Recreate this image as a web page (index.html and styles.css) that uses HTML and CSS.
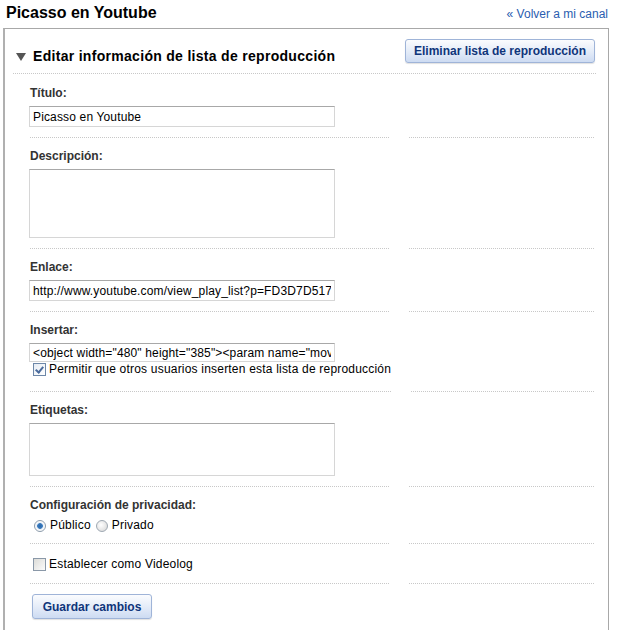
FILE: index.html
```html
<!DOCTYPE html>
<html lang="es">
<head>
  <meta charset="UTF-8">
  <meta name="viewport" content="width=device-width, initial-scale=1.0">
  <title>Picasso en Youtube</title>
  <link rel="stylesheet" href="styles.css">
</head>
<body>

  <div class="page-head">
    <h1 class="page-title">Picasso en Youtube</h1>
    <a class="back-link" href="#">« Volver a mi canal</a>
  </div>

  <div class="panel">
    <div class="panel-head">
      <h2 class="panel-title">
        <svg class="toggle" width="10" height="8" viewBox="0 0 10 8"><polygon points="0,0 10,0 5,8" fill="#555"/></svg>
        Editar información de lista de reproducción
      </h2>
      <button class="btn btn-delete" type="button">Eliminar lista de reproducción</button>
    </div>

    <form class="panel-body">
      <!-- Titulo -->
      <div class="row">
        <div class="field">
          <label class="field-label">Título:</label>
          <input class="text-input" type="text" value="Picasso en Youtube">
        </div>
        <div class="aside"></div>
      </div>

      <!-- Descripcion -->
      <div class="row">
        <div class="field">
          <label class="field-label">Descripción:</label>
          <textarea class="text-area desc"></textarea>
        </div>
        <div class="aside"></div>
      </div>

      <!-- Enlace -->
      <div class="row">
        <div class="field">
          <label class="field-label">Enlace:</label>
          <input class="text-input" type="text" value="http://www.youtube.com/view_play_list?p=FD3D7D51747D1E70">
        </div>
        <div class="aside"></div>
      </div>

      <!-- Insertar -->
      <div class="row">
        <div class="field field-embed">
          <label class="field-label">Insertar:</label>
          <input class="text-input embed" type="text" value="&lt;object width=&quot;480&quot; height=&quot;385&quot;&gt;&lt;param name=&quot;movie&quot; value=&quot;http://www.youtube.com/p/FD3D7D517&quot;&gt;">
          <label class="option"><input class="check" type="checkbox" checked> Permitir que otros usuarios inserten esta lista de reproducción</label>
        </div>
        <div class="aside"></div>
      </div>

      <!-- Etiquetas -->
      <div class="row">
        <div class="field">
          <label class="field-label">Etiquetas:</label>
          <textarea class="text-area tags"></textarea>
        </div>
        <div class="aside"></div>
      </div>

      <!-- Privacidad -->
      <div class="row">
        <div class="field">
          <label class="field-label">Configuración de privacidad:</label>
          <div class="radios">
            <label class="option"><input class="radio" type="radio" name="privacy" checked> Público</label>
            <label class="option"><input class="radio" type="radio" name="privacy"> Privado</label>
          </div>
        </div>
        <div class="aside"></div>
      </div>

      <!-- Videolog -->
      <div class="row">
        <div class="field field-single">
          <label class="option"><input class="check" type="checkbox"> Establecer como Videolog</label>
        </div>
        <div class="aside"></div>
      </div>

      <div class="actions">
        <button class="btn btn-save" type="button">Guardar cambios</button>
      </div>
    </form>
  </div>

</body>
</html>
```

FILE: styles.css
```css
body {
  margin: 0;
  font-family: "Liberation Sans", Arial, sans-serif;
  font-size: 12px;
  color: #000000;
  background: #ffffff;
}

.page-head {
  display: flex;
  justify-content: space-between;
  align-items: baseline;
  height: 28px;
  padding: 0 12px 0 6px;
  box-sizing: border-box;
}

.page-title {
  margin: 3px 0 0 0;
  font-size: 16px;
  line-height: 19px;
  font-weight: bold;
}

.back-link {
  color: #2a5db0;
  text-decoration: none;
  font-size: 12px;
}

.panel {
  width: 606px;
  margin-left: 3px;
  border: 1px solid #a8a8a8;
  border-left: 2px solid #b0b0b0;
  border-bottom: none;
  box-sizing: border-box;
  padding: 0 12px 20px 8px;
}

.panel-head {
  display: flex;
  justify-content: space-between;
  align-items: flex-start;
  height: 24px;
  padding: 10px 1px 10px 3px;
  border-bottom: 1px dotted #c8c8c8;
}

.panel-title {
  margin: 9px 0 0 0;
  font-size: 14px;
  line-height: 17px;
  font-weight: bold;
  letter-spacing: 0.3px;
  display: flex;
  align-items: center;
  gap: 7px;
}

.toggle {
  display: block;
  margin-top: 1px;
}

.btn {
  font-family: "Liberation Sans", Arial, sans-serif;
  font-size: 12px;
  font-weight: bold;
  color: #0f357a;
  background: linear-gradient(to bottom, #fbfcfe, #e3ebf8 55%, #cddbf2);
  border: 1px solid #9fb4d8;
  border-radius: 3px;
  box-shadow: 0 1px 1px rgba(0, 0, 0, 0.12);
  cursor: pointer;
}

.btn-delete {
  width: 190px;
  height: 24px;
  padding: 0;
}

.panel-body {
  margin: 0;
  padding: 0 2px 0 17px;
}

.row {
  display: flex;
  gap: 20px;
}

.field {
  width: 362px;
  padding: 11px 0 10px;
  border-bottom: 1px dotted #c8c8c8;
}

.row:first-child .field {
  padding-top: 12px;
}

.aside {
  width: 186px;
  border-bottom: 1px dotted #c8c8c8;
}

.field-label {
  display: block;
  font-weight: bold;
  color: #333333;
  line-height: 15px;
  margin-bottom: 5px;
}

.text-input,
.text-area {
  display: block;
  width: 306px;
  margin-left: -1px;
  box-sizing: border-box;
  border: 1px solid #d6d6d6;
  border-top-color: #a8a8a8;
  font-family: "Liberation Sans", Arial, sans-serif;
  font-size: 12px;
  letter-spacing: 0.15px;
  color: #000000;
  background: #ffffff;
  outline: none;
}

.text-input {
  height: 21px;
  padding: 0 3px;
}

.text-input.embed {
  height: 19px;
}

.text-area {
  resize: none;
  padding: 2px 3px;
}

.text-area.desc {
  height: 69px;
}

.text-area.tags {
  height: 53px;
}

.option {
  display: inline-flex;
  align-items: center;
  line-height: 15px;
  letter-spacing: 0.2px;
  white-space: nowrap;
  color: #000000;
}

.field-embed .option {
  margin: 0 0 4px 3px;
}

.field-single {
  padding: 13px 0 9px;
}

.field-single .option {
  margin-left: 3px;
}

.radios {
  display: flex;
  gap: 5px;
  margin: 2px 0 0 4px;
}

.check {
  appearance: none;
  position: relative;
  flex: none;
  width: 13px;
  height: 13px;
  margin: 0 3px 0 0;
  border: 1px solid #8a98a8;
  background: linear-gradient(135deg, #dcdcd8, #fbfbfb);
  box-sizing: border-box;
}

.check:checked {
  border-color: #6d87a8;
  background: linear-gradient(135deg, #e6ecf4, #ffffff);
}

.check:checked::after {
  content: "";
  position: absolute;
  left: 3px;
  top: 1px;
  width: 3px;
  height: 6px;
  border: solid #4a6a9c;
  border-width: 0 2px 2px 0;
  transform: rotate(40deg);
}

.radio {
  appearance: none;
  flex: none;
  width: 12px;
  height: 12px;
  margin: 0 4px 0 0;
  border: 1px solid #9ea8b2;
  border-radius: 50%;
  background: radial-gradient(circle at 40% 40%, #ffffff, #d4d4d4);
  box-sizing: border-box;
}

.radio:checked {
  border-color: #8c9bab;
  background: radial-gradient(circle, #2c67a8 0, #3b7cc0 2.5px, #e8eef5 3.2px, #ffffff 5px);
}

.actions {
  padding-top: 10px;
}

.btn-save {
  width: 120px;
  height: 25px;
  padding: 0;
  margin-left: 2px;
}
```
